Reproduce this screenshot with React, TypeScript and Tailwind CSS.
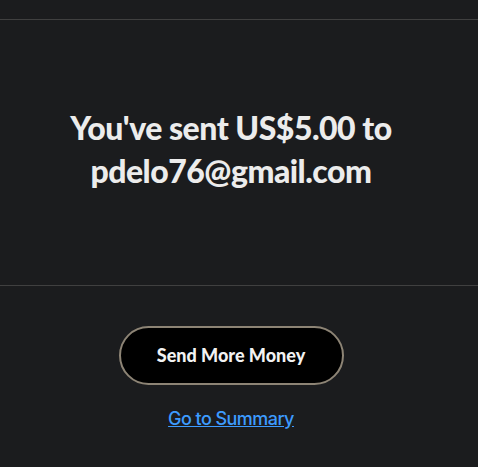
export default function App() {
  return (
    <div className="w-[478px] h-[467px] bg-[#1b1c1e] overflow-hidden" style={{ fontFamily: "Lato, 'Open Sans', sans-serif" }}>
      <div className="h-[19px]" />
      <div className="border-t border-[#404040]" />
      <div className="h-[265px] flex items-center justify-center pr-[16px]">
        <h1 className="text-[32px] leading-[43px] font-black text-[#ececec] text-center tracking-[-0.5px] mt-[-8px]">
          You've sent US$5.00 to
          <br />
          pdelo76@gmail.com
        </h1>
      </div>
      <div className="border-t border-[#404040]" />
      <div className="flex flex-col items-center pr-[16px] pt-[40px]">
        <button className="w-[225px] h-[59px] rounded-full bg-black border-2 border-[#8d8475] text-[#f2f2f2] text-[18px] font-black tracking-[0px]">
          Send More Money
        </button>
        <a className="mt-[20px] text-[#3d9bff] text-[18px] underline tracking-[-0.55px]" style={{ fontFamily: "Inter, 'Liberation Sans', sans-serif", fontWeight: 500 }}>
          Go to Summary
        </a>
      </div>
    </div>
  );
}
